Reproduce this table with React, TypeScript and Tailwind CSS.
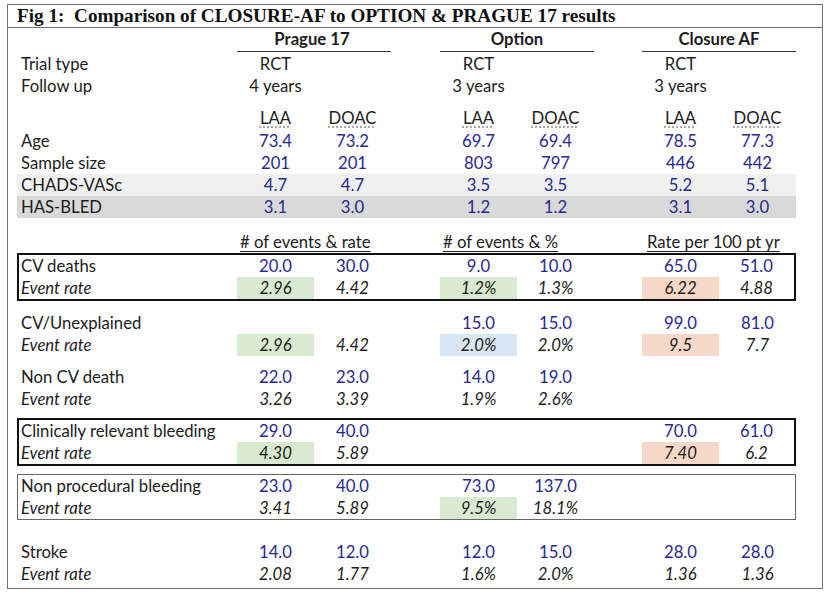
import React from "react";

type Cell = { v: string; hl?: string } | null;

const BLUE = "text-[#28288f]";

function Row({
  label,
  cells,
  italic,
  box,
}: {
  label: string;
  cells: Cell[];
  italic?: boolean;
  box?: 0 | 1 | 2;
}) {
  const cols =
    box === 2
      ? "grid-cols-[218px_77px_77px_49px_77px_77px_48px_77px_75px]"
      : box === 1
      ? "grid-cols-[219px_77px_77px_49px_77px_77px_48px_77px_76px]"
      : "grid-cols-[220px_77px_77px_49px_77px_77px_48px_77px_77px]";
  const slots = [cells[0], cells[1], null, cells[2], cells[3], null, cells[4], cells[5]];
  return (
    <div className={`grid ${cols} h-[22px] items-stretch`}>
      <div className={`flex items-center whitespace-nowrap ${box === 2 ? "pl-[2px]" : box === 1 ? "pl-[3px]" : "pl-[4px]"} ${italic ? "italic" : ""} text-[#1c1c1c]`}>
        {label}
      </div>
      {slots.map((c, i) => (
        <div
          key={i}
          className={`flex items-center justify-center ${c && c.hl ? c.hl : ""} ${italic ? "italic text-[#1c1c1c]" : BLUE}`}
        >
          {c ? c.v : ""}
        </div>
      ))}
    </div>
  );
}

const G = "bg-[#d8ebd0]";
const S = "bg-[#f8d8c8]";
const B = "bg-[#d9e7f4]";

const c = (v: string, hl?: string): Cell => ({ v, hl });

export default function App() {
  return (
    <div className="w-[831px] h-[594px] bg-white pt-[4px] pl-[7px] font-['Lato','Liberation_Sans',sans-serif] text-[16.7px] leading-none">
      <div className="w-[816px] h-[585px] border border-[#707070] flex flex-col">
        <div className="h-[23px] border-b border-[#707070] flex items-center pl-[9px] font-['Liberation_Serif','Times_New_Roman',serif] font-bold text-[19.2px] text-[#111] whitespace-pre">
          {"Fig 1:  Comparison of CLOSURE-AF to OPTION & PRAGUE 17 results"}
        </div>
        <div className="pl-[9px] flex flex-col">
          {/* group headers */}
          <div className="grid grid-cols-[220px_154px_49px_154px_48px_154px] h-[24px]">
            <div />
            <div className="flex items-center justify-center font-bold border-b border-[#333] text-[#1c1c1c] pr-[4px]">Prague 17</div>
            <div />
            <div className="flex items-center justify-center font-bold border-b border-[#333] text-[#1c1c1c]">Option</div>
            <div />
            <div className="flex items-center justify-center font-bold border-b border-[#333] text-[#1c1c1c]">Closure AF</div>
          </div>
          <div className="h-[1px]" />
          <div className="grid grid-cols-[220px_77px_77px_49px_77px_77px_48px_77px_77px] h-[22px] text-[#1c1c1c]">
            <div className="flex items-center pl-[4px]">Trial type</div>
            <div className="flex items-center justify-center">RCT</div>
            <div />
            <div />
            <div className="flex items-center justify-center">RCT</div>
            <div />
            <div />
            <div className="flex items-center justify-center">RCT</div>
            <div />
          </div>
          <div className="grid grid-cols-[220px_77px_77px_49px_77px_77px_48px_77px_77px] h-[22px] text-[#1c1c1c]">
            <div className="flex items-center pl-[4px]">Follow up</div>
            <div className="flex items-center justify-center">4 years</div>
            <div />
            <div />
            <div className="flex items-center justify-center">3 years</div>
            <div />
            <div />
            <div className="flex items-center justify-center">3 years</div>
            <div />
          </div>
          <div className="h-[10px]" />
          <div className="grid grid-cols-[220px_77px_77px_49px_77px_77px_48px_77px_77px] h-[22px] text-[#1c1c1c]">
            <div />
            {["LAA", "DOAC", "", "LAA", "DOAC", "", "LAA", "DOAC"].map((t, i) => (
              <div key={i} className="flex items-center justify-center">
                {t && (
                  <span className="underline decoration-dotted decoration-[#999] underline-offset-[3px]">{t}</span>
                )}
              </div>
            ))}
          </div>
          <div className="h-[1px]" />
          <Row label="Age" cells={[c("73.4"), c("73.2"), c("69.7"), c("69.4"), c("78.5"), c("77.3")]} />
          <Row label="Sample size" cells={[c("201"), c("201"), c("803"), c("797"), c("446"), c("442")]} />
          <div className="bg-[#f0f0f0] w-[779px]">
            <Row label="CHADS-VASc" cells={[c("4.7"), c("4.7"), c("3.5"), c("3.5"), c("5.2"), c("5.1")]} />
          </div>
          <div className="bg-[#d9d9d9] w-[779px]">
            <Row label="HAS-BLED" cells={[c("3.1"), c("3.0"), c("1.2"), c("1.2"), c("3.1"), c("3.0")]} />
          </div>
          <div className="h-[13px]" />
          <div className="grid grid-cols-[220px_154px_49px_154px_48px_154px] h-[22px] text-[#1c1c1c]">
            <div />
            <div className="flex items-center pl-[3px]"><span className="underline underline-offset-[3px]"># of events &amp; rate</span></div>
            <div />
            <div className="flex items-center pl-[3px]"><span className="underline underline-offset-[3px]"># of events &amp; %</span></div>
            <div />
            <div className="flex items-center pl-[5px]"><span className="underline underline-offset-[3px]">Rate per 100 pt yr</span></div>
          </div>
          <div className="w-[779px] border-2 border-[#111]">
            <Row box={2} label="CV deaths" cells={[c("20.0"), c("30.0"), c("9.0"), c("10.0"), c("65.0"), c("51.0")]} />
            <Row box={2} italic label="Event rate" cells={[c("2.96", G), c("4.42"), c("1.2%", G), c("1.3%"), c("6.22", S), c("4.88")]} />
          </div>
          <div className="h-[11px]" />
          <Row label="CV/Unexplained" cells={[null, null, c("15.0"), c("15.0"), c("99.0"), c("81.0")]} />
          <Row italic label="Event rate" cells={[c("2.96", G), c("4.42"), c("2.0%", B), c("2.0%"), c("9.5", S), c("7.7")]} />
          <div className="h-[10px]" />
          <Row label="Non CV death" cells={[c("22.0"), c("23.0"), c("14.0"), c("19.0"), null, null]} />
          <Row italic label="Event rate" cells={[c("3.26"), c("3.39"), c("1.9%"), c("2.6%"), null, null]} />
          <div className="h-[8px]" />
          <div className="w-[779px] border-2 border-[#111]">
            <Row box={2} label="Clinically relevant bleeding" cells={[c("29.0"), c("40.0"), null, null, c("70.0"), c("61.0")]} />
            <Row box={2} italic label="Event rate" cells={[c("4.30", G), c("5.89"), null, null, c("7.40", S), c("6.2")]} />
          </div>
          <div className="h-[8px]" />
          <div className="w-[779px] border border-[#666]">
            <Row box={1} label="Non procedural bleeding" cells={[c("23.0"), c("40.0"), c("73.0"), c("137.0"), null, null]} />
            <Row box={1} italic label="Event rate" cells={[c("3.41"), c("5.89"), c("9.5%", G), c("18.1%"), null, null]} />
          </div>
          <div className="h-[21px]" />
          <Row label="Stroke" cells={[c("14.0"), c("12.0"), c("12.0"), c("15.0"), c("28.0"), c("28.0")]} />
          <Row italic label="Event rate" cells={[c("2.08"), c("1.77"), c("1.6%"), c("2.0%"), c("1.36"), c("1.36")]} />
        </div>
      </div>
    </div>
  );
}
